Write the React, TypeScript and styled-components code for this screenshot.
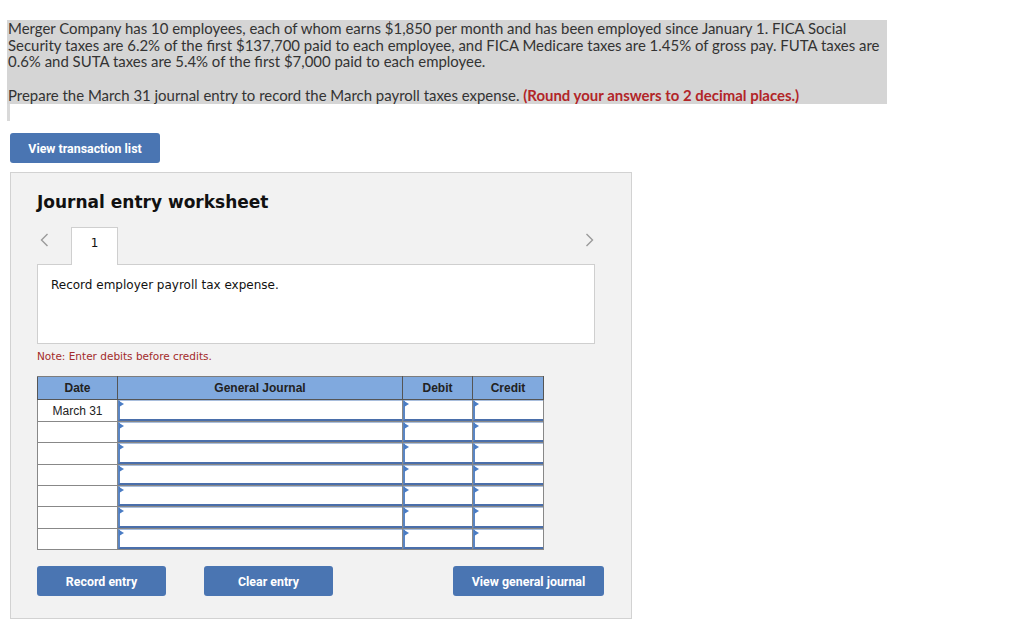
import styled, { createGlobalStyle } from 'styled-components';

const GlobalStyle = createGlobalStyle`
  html, body {
    margin: 0;
    padding: 0;
    background: #fff;
  }
  body {
    font-family: 'Lato', 'Liberation Sans', sans-serif;
    color: #333;
  }
`;

const Page = styled.div`
  width: 1024px;
  height: 627px;
  padding-top: 20px;
  box-sizing: border-box;
  overflow: hidden;
`;

const Prompt = styled.div`
  margin-left: 7px;
  width: 880px;
  background: #d5d5d5;
  padding: 0 0 1px 1px;
  box-sizing: border-box;
  font-size: 14.95px;
  line-height: 16.6px;
  color: #333;

  p {
    margin: 0;
    white-space: nowrap;
  }

  p + p {
    margin-top: 17px;
  }
`;

const Hint = styled.span`
  color: #b22528;
  font-weight: bold;
`;

const LeftStrip = styled.div`
  margin-left: 7px;
  width: 3px;
  height: 17px;
  background: #d9d9d9;
`;

const BlueButton = styled.button<{ $w: number }>`
  width: ${(p) => p.$w}px;
  height: 30px;
  background: #4a75b2;
  color: #fff;
  border: none;
  border-radius: 3px;
  font-family: 'Roboto', 'Liberation Sans', sans-serif;
  font-weight: bold;
  font-size: 12.4px;
  cursor: pointer;
  padding: 0;
`;

const TopButtonRow = styled.div`
  margin: 12px 0 0 10px;
`;

const Panel = styled.div`
  margin: 9px 0 0 10px;
  width: 622px;
  height: 447px;
  box-sizing: border-box;
  background: #f2f2f2;
  border: 1px solid #d2d2d2;
  padding: 18px 0 0 26px;
  font-family: 'DejaVu Sans', Verdana, sans-serif;
`;

const Title = styled.h2`
  margin: 0;
  font-size: 17px;
  font-weight: bold;
  color: #111;
  line-height: 22px;
`;

const TabRow = styled.div`
  display: flex;
  align-items: flex-start;
  width: 568px;
  margin-top: 14px;
  position: relative;
  z-index: 1;
`;

const Arrow = styled.div`
  width: 34px;
  height: 26px;
  display: flex;
  align-items: center;
  padding-left: 3px;
  box-sizing: border-box;
`;

const Tab = styled.div`
  width: 47px;
  height: 38px;
  box-sizing: border-box;
  background: #fff;
  border: 1px solid #cfcfcf;
  border-bottom: none;
  text-align: center;
  font-size: 12px;
  color: #111;
  padding-top: 8px;
`;

const RightArrow = styled(Arrow)`
  margin-left: auto;
  justify-content: center;
`;

const Description = styled.div`
  margin-top: -1px;
  width: 558px;
  height: 80px;
  box-sizing: border-box;
  background: #fff;
  border: 1px solid #cfcfcf;
  padding: 13px 0 0 13px;
  font-size: 12px;
  color: #111;
`;

const Note = styled.div`
  margin-top: 6px;
  font-size: 10.5px;
  color: #a32b2b;
`;

const Table = styled.table`
  margin-top: 14px;
  border-collapse: collapse;
  font-family: 'Liberation Sans', Arial, sans-serif;
  font-size: 12px;
  background: #fff;
`;

const HeadCell = styled.th<{ $w: number }>`
  width: ${(p) => p.$w}px;
  height: 22px;
  padding: 0;
  background: #80a9de;
  color: #222;
  font-weight: bold;
  border: 1px solid #555;
  border-top-color: #7d7d7d;
`;

const DateCell = styled.td`
  height: 20.4px;
  padding: 0;
  text-align: center;
  color: #222;
  border: 1px solid #888;
`;

const InputTd = styled.td`
  height: 20.4px;
  padding: 0;
  border: 1px solid #888;
  border-left-color: #5a80b8;
`;

const InputBox = styled.div`
  position: relative;
  height: 20.4px;
  box-sizing: border-box;
  border-left: 2px solid #5b86c4;
  border-bottom: 2px solid #4a6fab;
  border-top: 1px solid #a9bedd;
  background: #fff;

  &::before {
    content: '';
    position: absolute;
    top: 0;
    left: -1px;
    border-left: 5px solid #4a7cc4;
    border-top: 3px solid transparent;
    border-bottom: 3px solid transparent;
  }
`;

const BottomRow = styled.div`
  display: flex;
  width: 567px;
  margin-top: 16px;
  gap: 38px;

  & > :last-child {
    margin-left: auto;
  }
`;

function Chevron({ dir }: { dir: 'left' | 'right' }) {
  return (
    <svg width="9" height="14" viewBox="0 0 9 14">
      <path
        d={dir === 'left' ? 'M7.5 1 L1.5 7 L7.5 13' : 'M1.5 1 L7.5 7 L1.5 13'}
        fill="none"
        stroke="#9a9a9a"
        strokeWidth="1.4"
      />
    </svg>
  );
}

const rows = ['March 31', '', '', '', '', '', ''];

export default function App() {
  return (
    <Page>
      <GlobalStyle />
      <Prompt>
        <p>
          Merger Company has 10 employees, each of whom earns $1,850 per month and has been employed since January 1. FICA Social
          <br />
          Security taxes are 6.2% of the first $137,700 paid to each employee, and FICA Medicare taxes are 1.45% of gross pay. FUTA taxes are
          <br />
          0.6% and SUTA taxes are 5.4% of the first $7,000 paid to each employee.
        </p>
        <p>
          Prepare the March 31 journal entry to record the March payroll taxes expense.{' '}
          <Hint>(Round your answers to 2 decimal places.)</Hint>
        </p>
      </Prompt>
      <LeftStrip />
      <TopButtonRow>
        <BlueButton $w={150}>View transaction list</BlueButton>
      </TopButtonRow>
      <Panel>
        <Title>Journal entry worksheet</Title>
        <TabRow>
          <Arrow>
            <Chevron dir="left" />
          </Arrow>
          <Tab>1</Tab>
          <RightArrow>
            <Chevron dir="right" />
          </RightArrow>
        </TabRow>
        <Description>Record employer payroll tax expense.</Description>
        <Note>Note: Enter debits before credits.</Note>
        <Table>
          <thead>
            <tr>
              <HeadCell $w={79}>Date</HeadCell>
              <HeadCell $w={284}>General Journal</HeadCell>
              <HeadCell $w={69}>Debit</HeadCell>
              <HeadCell $w={70}>Credit</HeadCell>
            </tr>
          </thead>
          <tbody>
            {rows.map((d, i) => (
              <tr key={i}>
                <DateCell>{d}</DateCell>
                <InputTd>
                  <InputBox />
                </InputTd>
                <InputTd>
                  <InputBox />
                </InputTd>
                <InputTd>
                  <InputBox />
                </InputTd>
              </tr>
            ))}
          </tbody>
        </Table>
        <BottomRow>
          <BlueButton $w={129}>Record entry</BlueButton>
          <BlueButton $w={129}>Clear entry</BlueButton>
          <BlueButton $w={151}>View general journal</BlueButton>
        </BottomRow>
      </Panel>
    </Page>
  );
}
